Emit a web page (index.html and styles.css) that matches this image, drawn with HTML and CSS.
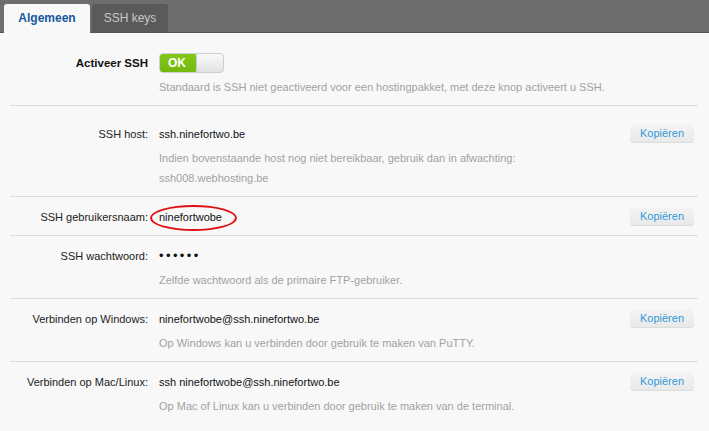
FILE: index.html
```html
<!DOCTYPE html>
<html lang="nl">
<head>
    <meta charset="UTF-8">
    <title>SSH</title>
    <link rel="stylesheet" href="styles.css">
</head>
<body>
    <div class="tabbar">
        <div class="tab active">Algemeen</div>
        <div class="tab">SSH keys</div>
    </div>
    <div class="content">
        <div class="row first">
            <div class="label strong">Activeer SSH</div>
            <div class="value">
                <div class="toggle"><span class="toggle-on">OK</span><span class="toggle-knob"></span></div>
                <div class="desc">Standaard is SSH niet geactiveerd voor een hostingpakket, met deze knop activeert u SSH.</div>
            </div>
            <div class="action"></div>
        </div>
        <div class="row second">
            <div class="label">SSH host:</div>
            <div class="value">
                <div class="main">ssh.ninefortwo.be</div>
                <div class="desc">Indien bovenstaande host nog niet bereikbaar, gebruik dan in afwachting:<br>ssh008.webhosting.be</div>
            </div>
            <div class="action"><button class="copy">Kopiëren</button></div>
        </div>
        <div class="row">
            <div class="label">SSH gebruikersnaam:</div>
            <div class="value">
                <div class="main circled">ninefortwobe<span class="ring"></span></div>
            </div>
            <div class="action"><button class="copy">Kopiëren</button></div>
        </div>
        <div class="row">
            <div class="label">SSH wachtwoord:</div>
            <div class="value">
                <div class="main dots">&bull;&bull;&bull;&bull;&bull;&bull;</div>
                <div class="desc">Zelfde wachtwoord als de primaire FTP-gebruiker.</div>
            </div>
            <div class="action"></div>
        </div>
        <div class="row">
            <div class="label">Verbinden op Windows:</div>
            <div class="value">
                <div class="main">ninefortwobe@ssh.ninefortwo.be</div>
                <div class="desc">Op Windows kan u verbinden door gebruik te maken van PuTTY.</div>
            </div>
            <div class="action"><button class="copy">Kopiëren</button></div>
        </div>
        <div class="row last">
            <div class="label">Verbinden op Mac/Linux:</div>
            <div class="value">
                <div class="main">ssh ninefortwobe@ssh.ninefortwo.be</div>
                <div class="desc">Op Mac of Linux kan u verbinden door gebruik te maken van de terminal.</div>
            </div>
            <div class="action"><button class="copy">Kopiëren</button></div>
        </div>
    </div>
</body>
</html>
```

FILE: styles.css
```css
body {
    margin: 0;
    background-color: #f8f8f8;
    font-family: 'Liberation Sans', Arial, sans-serif;
    font-size: 11px;
    color: #1a1a1a;
}

.tabbar {
    display: flex;
    gap: 2px;
    height: 33px;
    padding: 4px 0 0 4px;
    box-sizing: border-box;
    background-color: #6e6e6e;
    border-bottom: 1px solid #555;
}

.tab {
    width: 76px;
    height: 28px;
    line-height: 29px;
    text-align: center;
    background-color: #5a5a5a;
    color: #c8c8c8;
    border-radius: 3px 3px 0 0;
    font-size: 12px;
}

.tab.active {
    width: 86px;
    height: 29px;
    background-color: #f8f8f8;
    color: #16599f;
    font-weight: bold;
    position: relative;
    z-index: 1;
}

.content {
    padding: 0 11px 0 10px;
}

.row {
    display: grid;
    grid-template-columns: 138px 1fr 68px;
    column-gap: 11px;
    padding: 10px 0 8px 0;
    border-bottom: 1px solid #dedede;
}

.row.first {
    padding-top: 20px;
    padding-bottom: 8px;
}

.row.second {
    padding-top: 18px;
}

.row.last {
    border-bottom: none;
}

.label {
    text-align: right;
    line-height: 20px;
    color: #222;
}

.label.strong {
    font-weight: bold;
    font-size: 11.5px;
    color: #111;
}

.main {
    line-height: 20px;
    color: #111;
}

.desc {
    margin-top: 4px;
    line-height: 20px;
    color: #a2a2a2;
}

.dots {
    font-size: 13px;
    letter-spacing: 2.4px;
}

.circled {
    position: relative;
    display: inline-block;
}

.ring {
    position: absolute;
    left: -9px;
    top: -2px;
    width: 87px;
    height: 26px;
    border: 2px solid #e01010;
    border-radius: 50%;
    box-sizing: border-box;
}

.action {
    padding-right: 4px;
}

.toggle {
    display: flex;
    width: 65px;
    height: 20px;
    border: 1px solid #cfcfcf;
    border-radius: 4px;
    box-sizing: border-box;
    overflow: hidden;
    background: linear-gradient(#f4f4f4, #dedede);
}

.toggle-on {
    width: 36px;
    line-height: 18px;
    padding-left: 8px;
    box-sizing: border-box;
    background: linear-gradient(#84c81a, #74b80e);
    color: #fff;
    font-weight: bold;
    font-size: 12px;
}

.toggle-knob {
    flex: 1;
    border-left: 1px solid #c8c8c8;
    border-radius: 4px;
    background: linear-gradient(#fafafa, #e2e2e2);
}

.copy {
    width: 64px;
    height: 19px;
    padding: 0;
    border: none;
    border-bottom: 1px solid #dcdcdc;
    border-radius: 4px;
    background: linear-gradient(#f4f4f4, #e9e9e9);
    color: #2e9ad8;
    font-family: 'Liberation Sans', Arial, sans-serif;
    font-size: 11px;
}
```
